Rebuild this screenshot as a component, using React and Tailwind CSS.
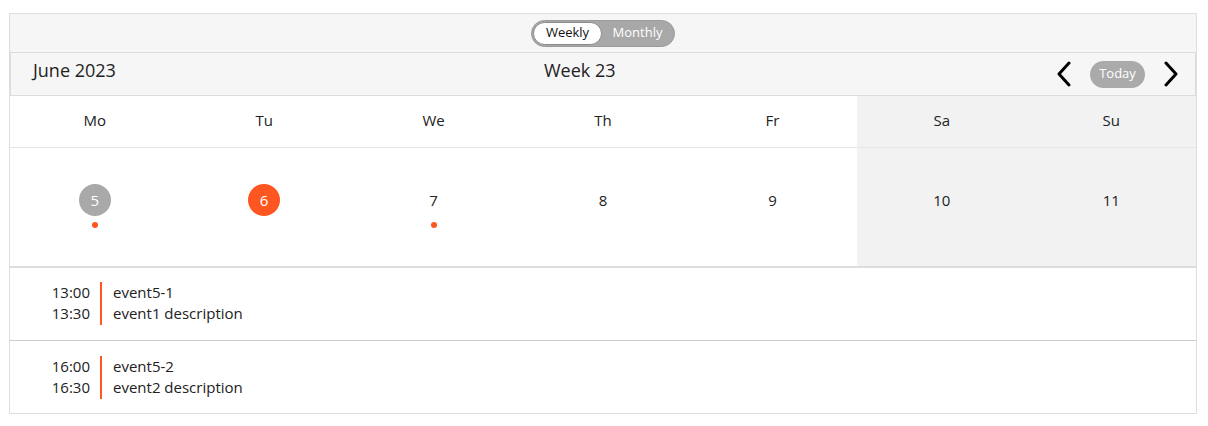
import React from 'react';

const days = [
  { name: 'Mo', date: 5, dot: true, kind: 'selected' },
  { name: 'Tu', date: 6, kind: 'today' },
  { name: 'We', date: 7, dot: true },
  { name: 'Th', date: 8 },
  { name: 'Fr', date: 9 },
  { name: 'Sa', date: 10, weekend: true },
  { name: 'Su', date: 11, weekend: true },
];

const events = [
  { start: '13:00', end: '13:30', title: 'event5-1', desc: 'event1 description' },
  { start: '16:00', end: '16:30', title: 'event5-2', desc: 'event2 description' },
];

function Chevron({ dir }) {
  return (
    <svg width="16" height="26" viewBox="0 0 16 26" fill="none">
      <polyline
        points={dir === 'left' ? '13,2 3,13 13,24' : '3,2 13,13 3,24'}
        stroke="#000"
        strokeWidth="3"
        strokeLinecap="round"
        strokeLinejoin="round"
      />
    </svg>
  );
}

function DateBadge({ day }) {
  if (day.kind === 'selected') {
    return <span className="w-8 h-8 rounded-full bg-[#a9a9a9] text-white flex items-center justify-center">{day.date}</span>;
  }
  if (day.kind === 'today') {
    return <span className="w-8 h-8 rounded-full bg-[#fe5620] text-white flex items-center justify-center">{day.date}</span>;
  }
  return <span className="w-8 h-8 flex items-center justify-center text-[#222]">{day.date}</span>;
}

export default function App() {
  return (
    <div className="w-[1208px] h-[426px] bg-white pt-[13px] px-[9px] font-['Open_Sans',sans-serif] text-[#222]">
      <div className="border border-[#dedede] w-[1188px]">
        {/* view switcher */}
        <div className="h-[38px] bg-[#f6f6f6] flex items-center justify-center">
          <div className="h-[27px] w-[144px] rounded-full bg-[#a8a8a8] border border-[#9a9a9a] p-[1px] flex items-center text-[13px]">
            <span className="h-full w-[69px] rounded-full bg-white border border-[#8a8a8a] flex items-center justify-center text-[#111]">Weekly</span>
            <span className="flex-1 text-center text-white">Monthly</span>
          </div>
        </div>

        {/* month / week header */}
        <div className="h-[44px] bg-[#f6f6f6] border border-[#dcdcdc] flex items-center pl-[22px] pr-[16px]">
          <span className="text-[18px] w-[511px] pb-[7px]">June 2023</span>
          <span className="text-[18px] pb-[7px]">Week 23</span>
          <div className="ml-auto flex items-center gap-[18px]">
            <Chevron dir="left" />
            <span className="h-[27px] w-[55px] rounded-full bg-[#aaaaaa] text-white text-[13px] flex items-center justify-center">Today</span>
            <Chevron dir="right" />
          </div>
        </div>

        {/* week grid */}
        <div className="grid grid-cols-7 border-b-2 border-[#dddde0]">
          {days.map((d) => (
            <div key={d.name} className={`flex flex-col ${d.weekend ? 'bg-[#f3f2f3]' : 'bg-white'}`}>
              <div className="h-[52px] flex items-center justify-center text-[15px] pb-[2px] border-b border-[#e6e6e6]">{d.name}</div>
              <div className="h-[118px] flex flex-col items-center pt-[36px] text-[15px]">
                <DateBadge day={d} />
                {d.dot && <span className="mt-[6px] w-[6px] h-[6px] rounded-full bg-[#fe5620]" />}
              </div>
            </div>
          ))}
        </div>

        {/* events */}
        {events.map((e, i) => (
          <div key={e.title} className={`flex items-center text-[15px] leading-[21px] ${i === 0 ? 'h-[73px] border-b border-[#cccccc] pb-[2px]' : 'h-[72px]'}`}>
            <div className="w-[80px] text-right text-[#222]">
              <div>{e.start}</div>
              <div>{e.end}</div>
            </div>
            <div className="ml-[10px] w-[2px] h-[43px] bg-[#fe5620]" />
            <div className="ml-[11px]">
              <div>{e.title}</div>
              <div>{e.desc}</div>
            </div>
          </div>
        ))}
      </div>
    </div>
  );
}
